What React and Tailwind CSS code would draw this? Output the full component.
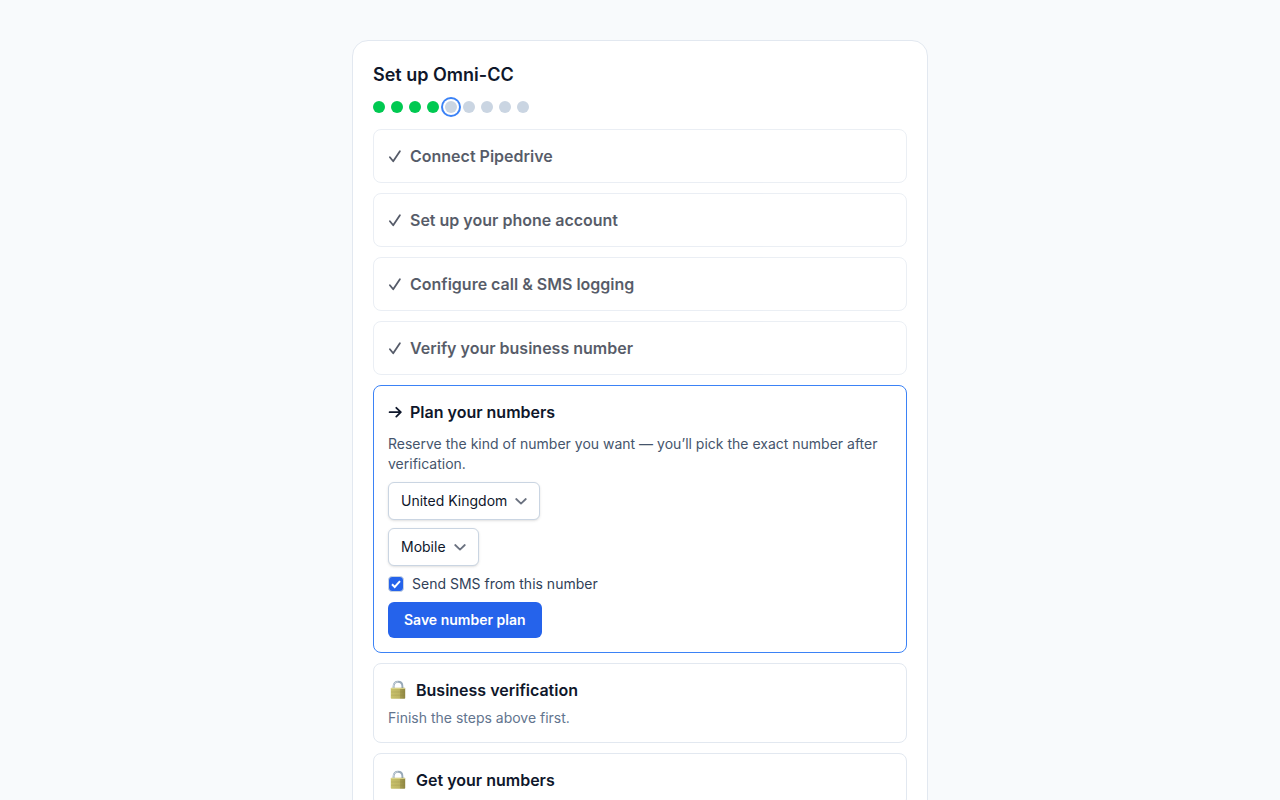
import { useState } from "react"
import clsx from "clsx"

const TOTAL_STEPS = 9
const CURRENT_STEP = 4

const doneSteps = [
  "Connect Pipedrive",
  "Set up your phone account",
  "Configure call & SMS logging",
  "Verify your business number",
]

const lockedSteps = [
  { title: "Business verification", hint: "Finish the steps above first." },
  { title: "Get your numbers" },
]

const CheckIcon = () => (
  <svg viewBox="0 0 14 24" className="h-6 w-3.5 shrink-0" fill="none" stroke="currentColor" strokeWidth="1.8" strokeLinecap="round" strokeLinejoin="round" aria-hidden="true">
    <path d="M1.900 13.300 5.200 17.300 11.900 7.300" />
  </svg>
)

const ArrowIcon = () => (
  <svg viewBox="0 0 14 24" className="h-6 w-3.5 shrink-0" fill="none" stroke="currentColor" strokeWidth="1.8" strokeLinecap="round" strokeLinejoin="round" aria-hidden="true">
    <path d="M1.600 12.200H12.600M8.300 7.800 12.800 12.200 8.300 16.600" />
  </svg>
)

const LockIcon = () => (
  <svg viewBox="0 0 20 20" className="h-5 w-5 shrink-0" aria-hidden="true">
    <defs>
      <linearGradient id="lock-body" x1="0" x2="1" y1="0" y2="0">
        <stop offset="0" stopColor="#c9c26c" />
        <stop offset="0.6" stopColor="#bdb462" />
        <stop offset="0.66" stopColor="#a59c50" />
        <stop offset="1" stopColor="#8f8642" />
      </linearGradient>
    </defs>
    <path d="M5.6 9V6.200C5.600 3.300 7.400 1.700 10 1.700s4.400 1.600 4.400 4.500V9" fill="none" stroke="#98a9b8" strokeWidth="1.900" />
    <path d="M5.300 8V6.200C5.300 3.400 7.300 1.800 10 1.800" fill="none" stroke="#d5dee6" strokeWidth="0.800" />
    <rect x="2.800" y="7.800" width="14.400" height="11" rx="0.800" fill="url(#lock-body)" />
    <path d="M3 8.500h14" stroke="#dcd78d" strokeWidth="0.900" />
    <path d="M3 12h14M3 15.200h14" stroke="#857c3c" strokeWidth="0.400" opacity="0.500" />
  </svg>
)

const ProgressDots = () => (
  <div className="mt-3 flex gap-1.5">
    {Array.from({ length: TOTAL_STEPS }, (_, i) => (
      <span
        key={i}
        className={clsx(
          "h-3 w-3 rounded-full",
          i < CURRENT_STEP ? "bg-green-500" : "bg-slate-300",
          i === CURRENT_STEP && "ring-2 ring-[#3b82f6] ring-offset-2"
        )}
      />
    ))}
  </div>
)

const SelectField = ({ label, value, onChange, options }) => (
  <div className="relative">
    <select
      aria-label={label}
      value={value}
      onChange={(e) => onChange(e.target.value)}
      className="block h-[38px] appearance-none rounded-md border border-slate-300 bg-white pr-8 pl-3 text-sm text-slate-900 shadow-sm [field-sizing:content]"
    >
      {options.map((option) => (
        <option key={option}>{option}</option>
      ))}
    </select>
    <svg
      viewBox="0 0 14 14"
      className="pointer-events-none absolute top-3 right-3 h-3.5 w-3.5 text-[#6b7280]"
      fill="none"
      stroke="currentColor"
      strokeWidth="1.8"
      strokeLinecap="round"
      strokeLinejoin="round"
      aria-hidden="true"
    >
      <path d="M2.200 5 7 9.600 11.800 5" />
    </svg>
  </div>
)

const NumberPlan = () => {
  const [country, setCountry] = useState("United Kingdom")
  const [kind, setKind] = useState("Mobile")
  const [sms, setSms] = useState(true)

  return (
    <li className="rounded-lg border border-[#3b82f6] p-3.5">
      <h2 className="flex gap-2 font-semibold">
        <ArrowIcon />
        Plan your numbers
      </h2>
      <form className="mt-2.5 flex flex-col items-start gap-2" onSubmit={(e) => e.preventDefault()}>
        <p className="text-sm text-slate-600">
          Reserve the kind of number you want — you’ll pick the exact number after verification.
        </p>
        <SelectField label="Country" value={country} onChange={setCountry} options={["United Kingdom"]} />
        <SelectField label="Number type" value={kind} onChange={setKind} options={["Mobile"]} />
        <label className="flex items-center gap-2 text-sm text-slate-700">
          <span className="relative block h-4 w-4">
            <input
              type="checkbox"
              checked={sms}
              onChange={(e) => setSms(e.target.checked)}
              className="peer block h-4 w-4 appearance-none rounded border border-slate-300 bg-white checked:bg-[#2563eb]"
            />
            <svg
              viewBox="0 0 16 16"
              className="pointer-events-none absolute inset-0 hidden h-4 w-4 text-white peer-checked:block"
              fill="none"
              stroke="currentColor"
              strokeWidth="2"
            >
              <path d="M4 8.300 6.700 11 12 5.200" />
            </svg>
          </span>
          Send SMS from this number
        </label>
        <button type="submit" className="rounded-md bg-[#2563eb] px-4 py-2 text-sm font-semibold text-white">
          Save number plan
        </button>
      </form>
    </li>
  )
}

const App = () => {
  return (
    <main className="min-h-screen bg-slate-50 px-4 py-10 font-['Inter',sans-serif] text-slate-900">
      <div className="mx-auto max-w-xl rounded-2xl border border-slate-200 bg-white p-5">
        <h1 className="text-lg font-semibold">Set up Omni-CC</h1>
        <ProgressDots />
        <ol className="mt-4 flex flex-col gap-2.5">
          {doneSteps.map((title) => (
            <li key={title} className="rounded-lg border border-slate-200 p-3.5 opacity-70">
              <h2 className="flex gap-2 font-semibold">
                <CheckIcon />
                {title}
              </h2>
            </li>
          ))}
          <NumberPlan />
          {lockedSteps.map(({ title, hint }) => (
            <li key={title} className="rounded-lg border border-slate-200 p-3.5">
              <h2 className="flex items-center gap-2 font-semibold">
                <LockIcon />
                {title}
              </h2>
              {hint && <p className="mt-1.5 text-sm text-slate-500">{hint}</p>}
            </li>
          ))}
        </ol>
      </div>
    </main>
  )
}

export default App
